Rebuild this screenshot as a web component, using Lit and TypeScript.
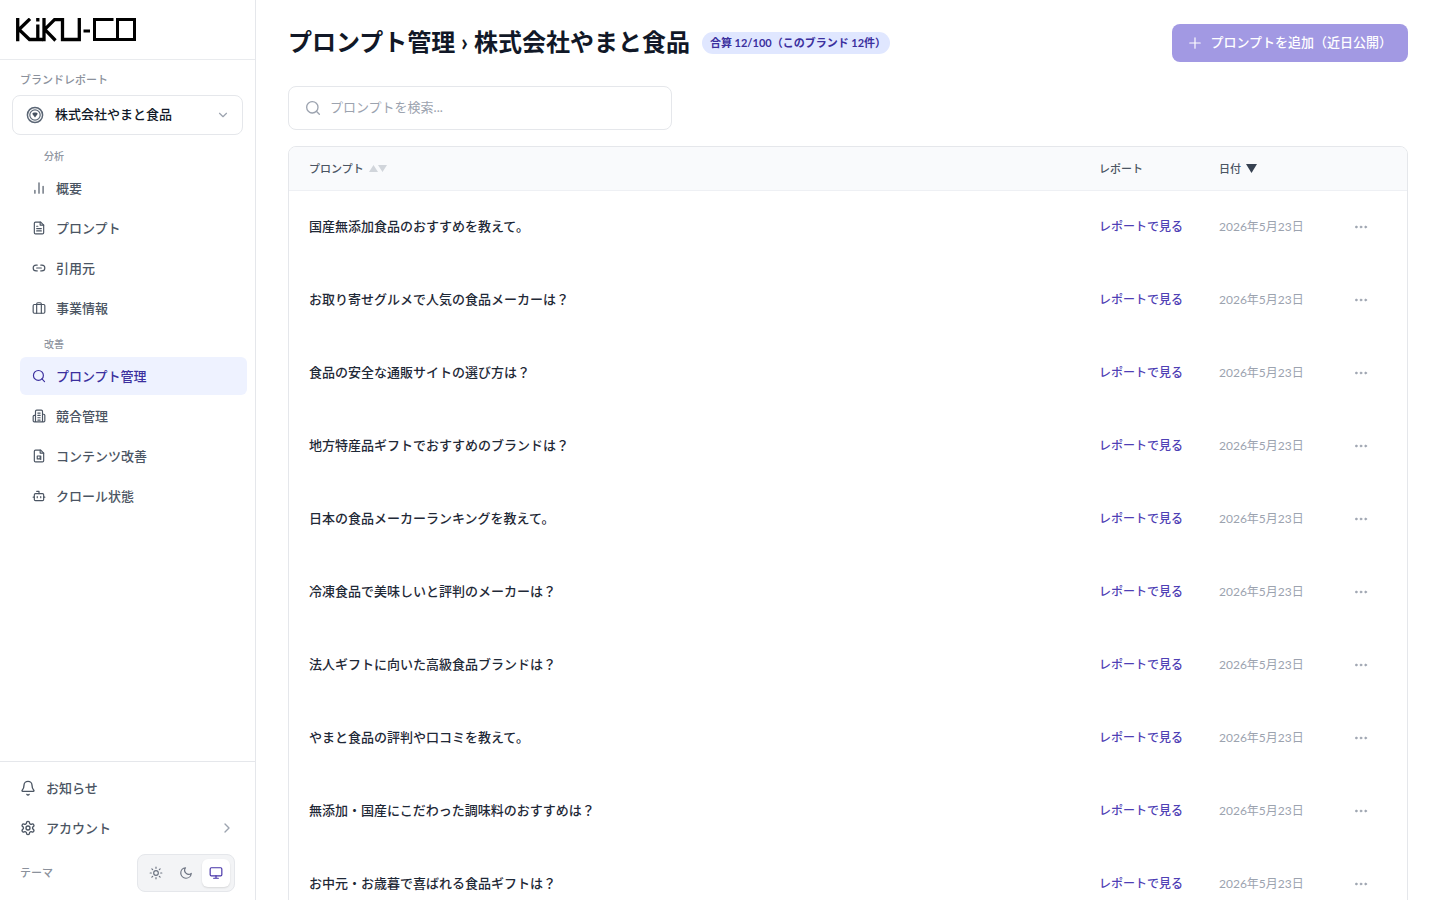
import { LitElement, html, css, svg } from "lit";
import { customElement, state } from "lit/decorators.js";
import { classMap } from "lit/directives/class-map.js";

const paths = {
  chart: svg`<path d="M5 21v-5M12 21V3M19 21V9"/>`,
  doc: svg`<path d="M15 2H6a2 2 0 0 0-2 2v16a2 2 0 0 0 2 2h12a2 2 0 0 0 2-2V7z"/><path d="M14 2v5h6M8 9h2M8 13h8M8 17h8"/>`,
  link: svg`<path d="M9 17H7A5 5 0 0 1 7 7h2M15 7h2a5 5 0 1 1 0 10h-2M8 12h8"/>`,
  briefcase: svg`<rect x="2" y="6" width="20" height="15" rx="2"/><path d="M8 21V5a2 2 0 0 1 2-2h4a2 2 0 0 1 2 2v16"/>`,
  search: svg`<circle cx="11" cy="11" r="8.5"/><path d="m21.5 21.5-4.5-4.5"/>`,
  building: svg`<path d="M6 22V4a2 2 0 0 1 2-2h8a2 2 0 0 1 2 2v18zM6 11H4a2 2 0 0 0-2 2v7a2 2 0 0 0 2 2h2M18 9h2a2 2 0 0 1 2 2v9a2 2 0 0 1-2 2h-2M10 7h4M10 11h4M10 15h4M10 19h4"/>`,
  docSearch: svg`<path d="M15 2H6a2 2 0 0 0-2 2v16a2 2 0 0 0 2 2h12a2 2 0 0 0 2-2V7z"/><path d="M14 2v5h6"/><rect x="9" y="12" width="5" height="5"/><path d="M15 12v6"/>`,
  bot: svg`<path d="M12 8V4H8"/><rect x="4" y="8" width="16" height="12" rx="2"/><path d="M2 14h2M20 14h2M15 13v2M9 13v2"/>`,
  bell: svg`<path d="M10.3 21.5a2 2 0 0 0 3.4 0M3.3 15.3A1 1 0 0 0 4 17h16a1 1 0 0 0 .7-1.7C19.4 14 18 12.5 18 8A6 6 0 0 0 6 8c0 4.500-1.400 6-2.700 7.300"/>`,
  gear: svg`<path d="M12.200 2h-.4a2 2 0 0 0-2 2v.2a2 2 0 0 1-1 1.700l-.4.300a2 2 0 0 1-2 0l-.2-.1a2 2 0 0 0-2.700.7l-.2.400a2 2 0 0 0 .7 2.700l.2.100a2 2 0 0 1 1 1.700v.5a2 2 0 0 1-1 1.700l-.2.100a2 2 0 0 0-.7 2.700l.2.400a2 2 0 0 0 2.700.7l.2-.1a2 2 0 0 1 2 0l.4.300a2 2 0 0 1 1 1.700v.2a2 2 0 0 0 2 2h.4a2 2 0 0 0 2-2v-.2a2 2 0 0 1 1-1.700l.4-.3a2 2 0 0 1 2 0l.2.100a2 2 0 0 0 2.700-.7l.2-.4a2 2 0 0 0-.7-2.700l-.2-.1a2 2 0 0 1-1-1.700v-.5a2 2 0 0 1 1-1.700l.2-.1a2 2 0 0 0 .7-2.700l-.2-.4a2 2 0 0 0-2.700-.7l-.2.100a2 2 0 0 1-2 0l-.4-.3a2 2 0 0 1-1-1.700V4a2 2 0 0 0-2-2z"/><circle cx="12" cy="12" r="3"/>`,
  sun: svg`<circle cx="12" cy="12" r="4"/><path d="M12 2v2M12 20v2M4.900 4.900l1.400 1.400M17.700 17.700l1.400 1.400M2 12h2M20 12h2M6.300 17.700l-1.400 1.400M19.100 4.900l-1.400 1.400"/>`,
  moon: svg`<path d="M21 12.800A9 9 0 1 1 11.200 3a7 7 0 0 0 9.800 9.800z"/>`,
  monitor: svg`<rect x="2" y="3" width="20" height="14" rx="2"/><path d="M8 21h8M12 17v4"/>`,
  plus: svg`<path d="M3 12h18M12 3v18"/>`,
  down: svg`<path d="m6 9 6 6 6-6"/>`,
  right: svg`<path d="m9 6 6 6-6 6"/>`,
  dots: svg`<g fill="currentColor"><circle cx="4" cy="12" r="1.700"/><circle cx="12" cy="12" r="1.700"/><circle cx="20" cy="12" r="1.700"/></g>`,
};
type IconName = keyof typeof paths;

const icon = (name: IconName, size = 14, stroke = 2) => html`<svg
  width=${size} height=${size} viewBox="0 0 24 24" fill="none" stroke="currentColor"
  stroke-width=${stroke} stroke-linecap="round" stroke-linejoin="round" aria-hidden="true"
>${paths[name]}</svg>`;

const logo = html`<svg width="120" height="24" viewBox="0 0 120 24" fill="none" stroke="#000" stroke-width="3" role="img" aria-label="KiKU-CO">
  <path stroke-width="3.300" d="M1.700 0v23.200M14 .8 3 11.500 13.500 21.500H27M21.800 6.500v15M21.800 0v3.600"/>
  <path stroke-width="3.300" d="M28 0v23.200M28.500 11.700 38.500 1.700H46.500V21.500H63.300V0M29 11.700 39.500 22.500" />
  <path d="M67.500 13h6.500M97.500 1.500H78.500v20H118.500V1.500H101.500v20"/>
</svg>`;

const brandMark = html`<svg class="brand-mark" width="18" height="18" viewBox="0 0 18 18" fill="none" stroke="#5b6675" aria-hidden="true">
  <circle cx="9" cy="9" r="7.600" stroke-width="1.500"/><circle cx="9" cy="9" r="5.200" stroke-width="1.200"/>
  <path d="M6.200 7.800 7.600 6.500h2.800l1.400 1.300L9 11.500z" fill="#465160" stroke="none"/>
</svg>`;

const analysis: [IconName, string][] = [
  ["chart", "概要"], ["doc", "プロンプト"], ["link", "引用元"], ["briefcase", "事業情報"],
];
const improve: [IconName, string][] = [
  ["search", "プロンプト管理"], ["building", "競合管理"], ["docSearch", "コンテンツ改善"], ["bot", "クロール状態"],
];
const themes: [IconName, string][] = [["sun", "ライト"], ["moon", "ダーク"], ["monitor", "システム"]];

const prompts = [
  "国産無添加食品のおすすめを教えて。",
  "お取り寄せグルメで人気の食品メーカーは？",
  "食品の安全な通販サイトの選び方は？",
  "地方特産品ギフトでおすすめのブランドは？",
  "日本の食品メーカーランキングを教えて。",
  "冷凍食品で美味しいと評判のメーカーは？",
  "法人ギフトに向いた高級食品ブランドは？",
  "やまと食品の評判や口コミを教えて。",
  "無添加・国産にこだわった調味料のおすすめは？",
  "お中元・お歳暮で喜ばれる食品ギフトは？",
];

const base = css`
  *, *::before, *::after { box-sizing: border-box; }
  svg { display: block; flex: none; }
  a { color: inherit; text-decoration: none; }
  button, input, select { font: inherit; color: inherit; margin: 0; padding: 0; border: 0; background: none; }
  button { cursor: pointer; }
`;

@customElement("side-bar")
class SideBar extends LitElement {
  @state() private current = "プロンプト管理";
  @state() private theme = "monitor";

  static styles = [base, css`
    :host { display: flex; flex-direction: column; min-height: 0; border-right: 1px solid #e5e7eb; background: #fff; }
    .logo { display: flex; align-items: center; height: 60px; padding: 0 16px; border-bottom: 1px solid #e9ebee; }
    .body { flex: 1; min-height: 0; overflow: hidden; padding: 12px 0 0; }
    .caption { display: block; padding: 0 20px; font-size: 11px; line-height: 16px; font-weight: 500; color: #8b919c; }
    .brand { display: grid; align-items: center; margin: 7px 12px 6px; }
    .brand > * { grid-area: 1 / 1; }
    .brand select { appearance: none; width: 100%; height: 40px; padding: 0 36px 2px 42px; border: 1px solid #e5e7eb; border-radius: 8px; background: #fff; font-size: 13px; font-weight: 500; color: #111827; }
    .brand svg { pointer-events: none; position: relative; }
    .brand-mark { margin-left: 14px; }
    .brand .chevron { justify-self: end; margin-right: 13px; color: #9ca3af; pointer-events: none; }
    nav { display: flex; flex-direction: column; gap: 2px; padding: 0 8px 0 20px; }
    .group { padding: 8px 24px 4px; font-size: 10px; line-height: 14px; font-weight: 500; color: #9096a1; }
    .item { display: flex; align-items: center; gap: 10px; height: 38px; padding: 0 12px; border-radius: 6px; font-size: 13px; line-height: 20px; font-weight: 500; color: #4b5563; }
    .item.active { background: #eef2ff; color: #3b2f9e; }
    .item span, .row span { padding-bottom: 1px; }
    .footer { display: flex; flex-direction: column; gap: 4px; padding: 8px 20px; border-top: 1px solid #e5e7eb; }
    .row { display: flex; align-items: center; gap: 10px; height: 36px; font-size: 13px; line-height: 20px; font-weight: 500; color: #4b5563; }
    .row span { flex: 1; text-align: left; }
    .row .chevron { color: #9ca3af; }
    .theme { display: flex; align-items: center; justify-content: space-between; margin-top: 4px; }
    .theme .caption { padding: 0; }
    .toggle { display: flex; gap: 2px; padding: 4px; border: 1px solid #e5e7eb; border-radius: 8px; background: #f3f4f6; }
    .toggle button { display: grid; place-items: center; width: 28px; height: 28px; border-radius: 6px; color: #6b7280; }
    .toggle .on { background: #fff; color: #4633a8; box-shadow: 0 1px 2px rgb(0 0 0 / 12%); }
  `];

  private items(list: [IconName, string][]) {
    return list.map(([ic, label]) => html`<a href="#" class=${classMap({ item: true, active: label === this.current })}
      @click=${(e: Event) => { e.preventDefault(); this.current = label; }}>${icon(ic)}<span>${label}</span></a>`);
  }

  render() {
    return html`
      <div class="logo">${logo}</div>
      <div class="body">
        <label class="caption" for="brand">ブランドレポート</label>
        <div class="brand">
          <select id="brand"><option>株式会社やまと食品</option></select>
          ${brandMark}<span class="chevron">${icon("down", 14)}</span>
        </div>
        <nav>
          <div class="group">分析</div>
          ${this.items(analysis)}
          <div class="group">改善</div>
          ${this.items(improve)}
        </nav>
      </div>
      <div class="footer">
        <a class="row" href="#">${icon("bell", 16)}<span>お知らせ</span></a>
        <button class="row">${icon("gear", 16)}<span>アカウント</span><i class="chevron">${icon("right", 16)}</i></button>
        <div class="theme">
          <span class="caption">テーマ</span>
          <div class="toggle">
            ${themes.map(([ic, label]) => html`<button aria-label=${label} aria-pressed=${this.theme === ic}
              class=${classMap({ on: this.theme === ic })} @click=${() => (this.theme = ic)}>${icon(ic)}</button>`)}
          </div>
        </div>
      </div>`;
  }
}

@customElement("prompt-manager")
class PromptManager extends LitElement {
  @state() private query = "";

  static styles = [base, css`
    :host { display: flex; flex-direction: column; min-width: 0; min-height: 0; overflow: auto; scrollbar-width: none; padding: 24px 32px; background: #fff; }
    header { display: flex; align-items: center; gap: 12px; min-height: 38px; }
    h1 { margin: 0; padding-bottom: 2px; font-size: 24px; line-height: 36px; font-weight: 700; color: #111827; white-space: nowrap; }
    .badge { padding: 2px 4px 2px 8px; border-radius: 11px; background: #e0e7ff; font-size: 11px; line-height: 18px; font-weight: 700; color: #3b2f9e; white-space: nowrap; }
    .add { display: flex; align-items: center; gap: 8px; height: 38px; margin-left: auto; padding: 0 16px; border-radius: 8px; background: #a299e3; color: #fff; font-size: 13px; line-height: 20px; font-weight: 500; white-space: nowrap; }
    .add span { padding-bottom: 2px; }
    .search { display: flex; align-items: center; gap: 9px; width: 100%; max-width: 384px; height: 44px; margin: 24px 0 16px; padding: 0 16px; border: 1px solid #e5e7eb; border-radius: 8px; color: #9ca3af; flex: none; }
    .search input { flex: 1; min-width: 0; outline: 0; padding-bottom: 2px; font-size: 13px; line-height: 20px; color: #111827; }
    .search input::placeholder { color: #9ca3af; opacity: 1; }
    .card { flex: none; border: 1px solid #e5e7eb; border-radius: 8px; overflow: hidden; }
    table { width: 100%; table-layout: fixed; border-collapse: separate; border-spacing: 0; }
    th, td { padding: 0 0 0 20px; text-align: left; white-space: nowrap; }
    th { height: 44px; border-bottom: 1px solid #eef0f4; background: #f9fafc; font-size: 11px; line-height: 16px; font-weight: 500; color: #4b5563; }
    th button { display: flex; align-items: center; gap: 5px; font-weight: 500; }
    td { height: 73px; padding-bottom: 4px; font-size: 13px; line-height: 20px; font-weight: 500; color: #1f2937; }
    .c-report { width: 120px; }
    .c-date { width: 116px; }
    .c-menu { width: 92px; padding: 0; }
    .sort { color: #d1d5db; }
    .sort.on { color: #374151; }
    td.c-report, td.c-date { padding-bottom: 2px; font-size: 12px; }
    td.c-report { color: #4f3fb5; }
    td.c-date { font-weight: 400; color: #9ca3af; }
    td.c-menu { padding: 0 0 2px; }
    .menu { display: grid; place-items: center; width: 28px; height: 28px; margin: 0 auto; color: #9ca3af; }
  `];

  render() {
    const rows = prompts.filter((p) => p.includes(this.query));
    return html`
      <header>
        <h1>プロンプト管理 › 株式会社やまと食品</h1>
        <span class="badge">合算 12/100（このブランド 12件）</span>
        <button class="add">${icon("plus", 14)}<span>プロンプトを追加（近日公開）</span></button>
      </header>
      <label class="search">${icon("search", 16)}
        <input type="text" aria-label="プロンプトを検索" placeholder="プロンプトを検索..."
          @input=${(e: Event) => (this.query = (e.target as HTMLInputElement).value)} />
      </label>
      <div class="card"><table>
        <thead><tr>
          <th><button>プロンプト<svg class="sort" width="18" height="7" viewBox="0 0 18 7" fill="currentColor" aria-hidden="true"><path d="M0 7 4.500 0 9 7zM9 0h9l-4.500 7z"/></svg></button></th>
          <th class="c-report">レポート</th>
          <th class="c-date"><button>日付<svg class="sort on" width="11" height="9" viewBox="0 0 11 9" fill="currentColor" aria-hidden="true"><path d="M0 0h11L5.500 9z"/></svg></button></th>
          <th class="c-menu"></th>
        </tr></thead>
        <tbody>${rows.map((p) => html`<tr>
          <td>${p}</td>
          <td class="c-report"><a href="#">レポートで見る</a></td>
          <td class="c-date">2026年5月23日</td>
          <td class="c-menu"><button class="menu" aria-label="メニュー">${icon("dots", 14, 1)}</button></td>
        </tr>`)}</tbody>
      </table></div>`;
  }
}

@customElement("app-root")
class AppRoot extends LitElement {
  static styles = css`
    :host { display: grid; grid-template-columns: 256px minmax(0, 1fr); height: 100vh; overflow: hidden; font-family: Lato, "Noto Sans CJK JP", sans-serif; }
  `;
  render() {
    return html`<side-bar></side-bar><prompt-manager lang="ja"></prompt-manager>`;
  }
}
